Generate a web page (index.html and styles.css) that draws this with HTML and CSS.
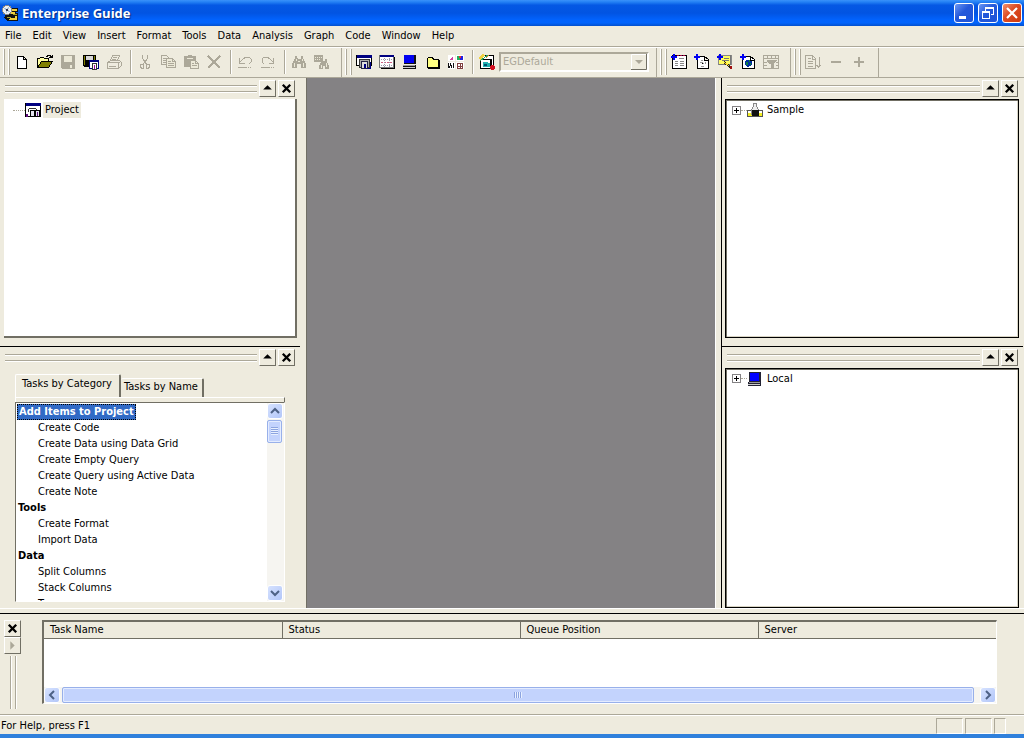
FILE: index.html
```
<!DOCTYPE html>
<html lang="en">
<head>
  <meta charset="UTF-8" />
  <meta name="viewport" content="width=device-width, initial-scale=1.0" />
  <title>Enterprise Guide</title>
  <link rel="stylesheet" href="styles.css">
</head>
<body>
  <header class="title-bar">
    <svg class="icon" viewBox="0 0 16 16"><path d="M5 3h11v4h-2v1h2v8H5l-3-3 3-5z" fill="#111"/><path d="M9 4h6v2H9zM8 7h5v2H8zM9 13h4v-2h2v4H7v-1z" fill="#f0d040"/><path d="M11 9h4v1h-4zM5 12h4v1H5z" fill="#a8a020"/><circle cx="5" cy="5" r="4.5" fill="#eef0f4" stroke="#888"/><path d="M2 3l3 2 2-3M4 8l1-3 3 2" stroke="#a8c4dc" fill="none"/><circle cx="5" cy="5" r="1.4" fill="#335"/></svg>
    <h1>Enterprise Guide</h1>
    <button class="win-btn" aria-label="Minimize"><svg viewBox="0 0 18 18"><path d="M4 12h7v3H4z" fill="#fff"/></svg></button>
    <button class="win-btn" aria-label="Restore"><svg class="crisp" viewBox="0 0 18 18"><path d="M6 3h9v8h-3v-1h2V5H7v2H6z" fill="#fff"/><path d="M3 7h8v8H3zM4 9v5h6V9z" fill="#fff" fill-rule="evenodd"/></svg></button>
    <button class="win-btn close" aria-label="Close"><svg viewBox="0 0 18 18"><path d="M4 4l10 10M14 4L4 14" stroke="#fff" stroke-width="2.2"/></svg></button>
  </header>

  <nav class="menu-bar">
    <a href="#">File</a>
    <a href="#">Edit</a>
    <a href="#">View</a>
    <a href="#">Insert</a>
    <a href="#">Format</a>
    <a href="#">Tools</a>
    <a href="#">Data</a>
    <a href="#">Analysis</a>
    <a href="#">Graph</a>
    <a href="#">Code</a>
    <a href="#">Window</a>
    <a href="#">Help</a>
  </nav>

  <div class="toolbars">
    <div class="toolbar">
      <span class="grip"></span>
      <button aria-label="New"><svg class="icon" viewBox="0 0 16 16"><path d="M3.5 2.5h6l3 3v9h-9zM9.500 2.500v3h3" fill="#fff" stroke="#000"/></svg></button>
      <button aria-label="Open"><svg class="icon" viewBox="0 0 16 16"><path d="M0.500 13.500v-9h2l1-1h3l1 1h4v3" fill="#ffffa0" stroke="#000"/><path d="M0.500 13.500l4-6h11l-4 6z" fill="#808000" stroke="#000"/><path d="M9 2h1v-1h3v1h1v1h1V1M12 3.500h3" fill="none" stroke="#000"/></svg></button>
      <button aria-label="Save" disabled><svg class="icon" viewBox="0 0 16 16"><path d="M1 1h14v14H2l-1-1z" fill="#aca899"/><path d="M4 2h8v6H4zM10 11h2v3h-2z" fill="#ece9d8"/></svg></button>
      <button aria-label="Save Project"><svg class="icon" viewBox="0 0 16 16"><path d="M0 1h13v12H1l-1-1z" fill="#000"/><path d="M1 2h1v9H1zM11 2h1v4h-1z" fill="#808000"/><path d="M3 2h7v4H3z" fill="#d8d8d8"/><path d="M6.500 6.500h9v8h-9z" fill="#fff" stroke="#000080"/><path d="M6 6h10v2H6z" fill="#000080"/><path d="M9.500 9.500h4v6h-4z" fill="#fff" stroke="#333"/><path d="M11 11h1v4h-1z" fill="#a000a0"/></svg></button>
      <button aria-label="Print" disabled><svg class="icon gray" viewBox="0 0 16 16"><path d="M4.500 6.500l2-5h7l-2 5M7 3.500h4M6 5.500h4M1.500 8.500l3-2h9l2 2v3l-3 3h-11zM1.500 8.500h11v6M3 12.500h7M12.500 8.500l3-1"/></svg></button>
      <span class="separator"></span>
      <button aria-label="Cut" disabled><svg class="icon gray" viewBox="0 0 16 16"><path d="M5.500 1v3l1 2 3 4M10.500 1v3l-1 2-3 4M4.500 10h2v4h-2l-1-1v-2zM9.500 10h2l1 1v2l-1 1h-2z"/></svg></button>
      <button aria-label="Copy" disabled><svg class="icon gray" viewBox="0 0 16 16"><path d="M1.500 1.500h5l2 2v7h-7zM3 4.500h3M3 6.500h3M3 8.500h3"/><path d="M6.500 4.500h6l3 3v6h-9z" fill="#ece9d8"/><path d="M12.500 4.500v3h3M8 7.500h3M8 9.500h6M8 11.500h6"/></svg></button>
      <button aria-label="Paste" disabled><svg class="icon gray" viewBox="0 0 16 16"><path d="M1 2h4V1h4v1h4v11H1z" fill="#aca899" stroke="none"/><path d="M4 4h6" stroke="#ece9d8"/><path d="M7.500 6.500h5l3 3v5h-8z" fill="#ece9d8"/><path d="M12.500 6.500v3h3M9 9.500h2M9 11.500h5"/></svg></button>
      <button aria-label="Delete" disabled><svg class="icon" viewBox="0 0 16 16"><path d="M2 2l12 12M14 2L2 14" stroke="#aca899" stroke-width="2"/></svg></button>
      <span class="separator"></span>
      <button aria-label="Undo" disabled><svg class="icon gray" viewBox="0 0 16 16"><path d="M2.500 4v5h5M3 8l3-3 3-2h3l2 2v3l-2 2M1 13.500h9M11 13.500h1M13 13.500h1"/></svg></button>
      <button aria-label="Redo" disabled><svg class="icon gray" viewBox="0 0 16 16"><path d="M13.500 4v5h-5M13 8l-3-3-3-2H4L2 5v3l2 2M1 13.500h9M11 13.500h1M13 13.500h1"/></svg></button>
      <span class="separator"></span>
      <button aria-label="Find" disabled><svg class="icon" viewBox="0 0 16 16"><path d="M4 2h2v2l1 1h2l1-1V2h2v2l3 6v4h-5v-4H6v4H1v-4l3-6z" fill="#aca899"/><path d="M5 5v2M3 9v4M11 5v2M12 9v4M7 7h2" stroke="#ece9d8"/></svg></button>
      <button aria-label="Replace" disabled><svg class="icon" viewBox="0 0 16 16"><path d="M0 1h9v7H0zM7 5h2v2h2V5h2v3l2 4v3h-4v-3H9v3H5v-3l2-4z" fill="#aca899"/><path d="M1 3h7M1 5h6" stroke="#ece9d8" stroke-dasharray="1 1"/><path d="M7 11v3M12 9v4" stroke="#ece9d8"/></svg></button>
    </div>

    <div class="toolbar">
      <span class="grip"></span>
      <button aria-label="Project Window"><svg class="icon" viewBox="0 0 16 16"><path d="M0.500 1.500h15v10h-15z" fill="#fff" stroke="#000"/><path d="M1 1h15v3H1z" fill="#000080"/><path d="M3.500 5.500h10v8h-10z" fill="#aaa" stroke="#333"/><path d="M5.500 7.500h6v7h-6z" fill="#ddd" stroke="#224"/><path d="M8 10h2v4H8zM14 8h1v7h-4v-1h3z" fill="#000080"/></svg></button>
      <button aria-label="Task Status"><svg class="icon" viewBox="0 0 16 16"><path d="M0.500 1.500h14v12h-14z" fill="#fff" stroke="#777"/><path d="M1 1h14v2H1z" fill="#000080"/><path d="M2 8.500h12" stroke="#d06080" stroke-dasharray="2 1"/><path d="M5.500 4v9M10.500 4v9M2 5.500h12M2 11.500h12" stroke="#99a" stroke-dasharray="1 1"/><path d="M15 3h1v12H2v-1h13z" fill="#000"/></svg></button>
      <button aria-label="Server List"><svg class="icon" viewBox="0 0 16 16"><path d="M2 1h12v9H2zM1 11h13v4H1z" fill="#111"/><path d="M2 1h10v8H2z" fill="#0000f0"/><path d="M1 11h12v1H1z" fill="#999"/><path d="M1 13h12v1H1z" fill="#ccc"/></svg></button>
      <button aria-label="Binder List"><svg class="icon" viewBox="0 0 16 16"><path d="M2.500 13.500v-9l1-1h4l1 2h5v8z" fill="#ffff80" stroke="#000"/><path d="M14 6v8H3" fill="none" stroke="#000"/></svg></button>
      <button aria-label="Task List"><svg class="icon" viewBox="0 0 16 16"><path d="M0 1h7v6H0zM8 1h8v6H8zM0 8h7v7H0zM8 8h8v7H8z" fill="#fff"/><path d="M2 5h1V4h1V3h1v3H2z" fill="#d040a0"/><path d="M9 2h3v4H9z" fill="#20b060"/><path d="M12 2h3v4h-3z" fill="#2020e0"/><path d="M11 2h2v2h-2z" fill="#f03030"/><path d="M0 9h1v5H0zM2 9h1v3H2zM3 11h1v3H3zM5 9h1v5H5zM1 12h1v2H1z" fill="#111"/><path d="M9.500 9.500h5v5h-5zM9 12h6M12 9v6" stroke="#804040" fill="none"/></svg></button>
      <span class="separator"></span>
      <button aria-label="Style"><svg class="icon" viewBox="0 0 16 16"><path d="M3 1h12v11h-2v3H1V5h2z" fill="#000"/><path d="M4 2h10v9h-1V5H4zM2 6h9v8H2z" fill="#fff"/><path d="M4 8h5v1h2v4H4z" fill="#20b0b0"/><path d="M5 10h3v2H5z" fill="#005070"/><path d="M0 4l3-4 3 1-4 6z" fill="#f0d040"/><path d="M1 7L9 1" stroke="#20a060"/><path d="M7 4l3-3" stroke="#e08020"/><path d="M12 11h3v1h1v3h-1v1h-3v-1h-1v-3h1z" fill="#d01020"/></svg></button>
      <select aria-label="Style name" disabled>
        <option>EGDefault</option>
      </select>
    </div>

    <div class="toolbar">
      <span class="grip"></span>
      <button aria-label="New Data"><svg class="icon" viewBox="0 0 16 16"><path d="M1.500 1.500h14v13h-14z" fill="#fff" stroke="#000"/><path d="M6 1.500h9" stroke="#a00040" stroke-dasharray="2 1"/><path d="M4 7.500h3M9 7.500h4M4 9.500h3M9 9.500h4M4 11.500h3M9 11.500h4M8 4.500h5" stroke="#888"/><path d="M0 2h2V0h2v2h2v2H4v2H2V4H0z" fill="#0000f0"/></svg></button>
      <button aria-label="New Code"><svg class="icon" viewBox="0 0 16 16"><path d="M3.500 14.500v-12h7l4 3v9zM10.500 2v4h4" fill="#fff" stroke="#000"/><path d="M7 6l2 1M6 9l2-1 2 2M7 12h3M11 8l1 2" stroke="#999"/><path d="M0 2h2V0h2v2h2v2H4v2H2V4H0z" fill="#0000f0"/></svg></button>
      <button aria-label="New Query"><svg class="icon" viewBox="0 0 16 16"><path d="M1.500 1.500h13v9h-13z" fill="#ffff60" stroke="#888"/><path d="M13.500 1v9H2M5 6.500h7M7 4.500h5" stroke="#777" fill="none"/><path d="M7 8l6 5" stroke="#222" stroke-width="2"/><path d="M7 8l5 4" stroke="#ffd820"/><path d="M13 12h2v3h-2z" fill="#a01010"/><path d="M0 2h2V0h2v2h2v2H4v2H2V4H0z" fill="#0000f0"/></svg></button>
      <button aria-label="New Report"><svg class="icon" viewBox="0 0 16 16"><path d="M2.500 14.500v-12h8l4 3v9z" fill="#fff" stroke="#000"/><path d="M10.500 2v4h4" stroke="#000" fill="none"/><path d="M6 6h4v1h2v4h-1v1H9v1H7v-1H6v-1H5V7h1z" fill="#0030a0"/><path d="M6 8h2v3H6zM9 6h1v2H9zM10 9h1v2h-1z" fill="#108040"/><path d="M0 2h2V0h2v2h2v2H4v2H2V4H0z" fill="#0000f0"/></svg></button>
      <button aria-label="Filter" disabled><svg class="icon gray" viewBox="0 0 16 16"><path d="M0.500 1.500h15v13h-15zM1 4.500h14M4.500 1v3M8.500 1v3M12.500 1v3M1 8.500h3M13 8.500h2M1 11.500h3M13 11.500h2"/><path d="M4 6h9v1l-3 3v4H8v-4L4 7z" fill="#aca899"/></svg></button>
    </div>

    <div class="toolbar">
      <span class="grip"></span>
      <button aria-label="Sort" disabled><svg class="icon gray" viewBox="0 0 16 16"><path d="M0.500 1.500h7l3 3v10h-10zM7.500 2v3h3M3 4.500h3M3 7.500h5M3 9.500h5M3 12.500h5M14 3v10M11.500 11l2 2 2-2"/></svg></button>
      <button aria-label="Collapse" disabled><svg class="icon" viewBox="0 0 16 16"><path d="M3 7h10v2H3z" fill="#aca899"/></svg></button>
      <button aria-label="Expand" disabled><svg class="icon" viewBox="0 0 16 16"><path d="M3 7h4V3h2v4h4v2H9v4H7V9H3z" fill="#aca899"/></svg></button>
    </div>
  </div>

  <main class="workspace">
    <aside class="dock left">
      <section class="pane">
        <div class="pane-bar">
          <span class="rails"></span>
          <button class="small-btn" aria-label="Expand pane"><svg viewBox="0 0 12 12"><path d="M6 3l4 4H2z" fill="#000"/></svg></button>
          <button class="small-btn" aria-label="Close pane"><svg viewBox="0 0 14 14"><path d="M3 3l8 8M11 3L3 11" stroke="#000" stroke-width="2.5"/></svg></button>
        </div>
        <ul class="tree raised">
          <li>
            <span class="stem"></span>
            <svg class="icon" viewBox="0 0 16 16"><path d="M0.500 1.500h15v13h-15z" fill="#fff" stroke="#000"/><path d="M1 1h15v3H1z" fill="#000080"/><path d="M4 6.500h7M3.500 7v3M11.500 7v2" stroke="#333"/><path d="M5.500 8.500h4v6h-4zM10.500 8.500h4v6h-4z" fill="#e4e4f0" stroke="#000"/><path d="M1 12h2v3H1zM12 10h1v4h-1z" fill="#601080"/></svg>
            <span class="label current">Project</span>
          </li>
        </ul>
      </section>
      <section class="pane">
        <div class="pane-bar">
          <span class="rails"></span>
          <button class="small-btn" aria-label="Expand pane"><svg viewBox="0 0 12 12"><path d="M6 3l4 4H2z" fill="#000"/></svg></button>
          <button class="small-btn" aria-label="Close pane"><svg viewBox="0 0 14 14"><path d="M3 3l8 8M11 3L3 11" stroke="#000" stroke-width="2.5"/></svg></button>
        </div>
        <div class="tabs">
          <button class="tab active">Tasks by Category</button>
          <button class="tab">Tasks by Name</button>
        </div>
        <div class="tab-edge"></div>
        <div class="task-box">
          <ul class="task-list">
            <li class="group"><span class="selected">Add Items to Project</span></li>
            <li>Create Code</li>
            <li>Create Data using Data Grid</li>
            <li>Create Empty Query</li>
            <li>Create Query using Active Data</li>
            <li>Create Note</li>
            <li class="group">Tools</li>
            <li>Create Format</li>
            <li>Import Data</li>
            <li class="group">Data</li>
            <li>Split Columns</li>
            <li>Stack Columns</li>
            <li>Transpose</li>
          </ul>
          <div class="scrollbar vertical">
            <button class="arrow" aria-label="Scroll up"><svg viewBox="0 0 14 14"><path d="M3 9l4-4 4 4" /></svg></button>
            <span class="thumb"></span>
            <button class="arrow last" aria-label="Scroll down"><svg viewBox="0 0 14 14"><path d="M3 5l4 4 4-4" /></svg></button>
          </div>
        </div>
      </section>
    </aside>

    <div class="canvas"></div>

    <aside class="dock right">
      <section class="pane">
        <div class="pane-bar">
          <span class="rails"></span>
          <button class="small-btn" aria-label="Expand pane"><svg viewBox="0 0 12 12"><path d="M6 3l4 4H2z" fill="#000"/></svg></button>
          <button class="small-btn" aria-label="Close pane"><svg viewBox="0 0 14 14"><path d="M3 3l8 8M11 3L3 11" stroke="#000" stroke-width="2.5"/></svg></button>
        </div>
        <ul class="tree sunken">
          <li>
            <button class="expander" aria-label="Expand Sample"><svg class="crisp" viewBox="0 0 9 9"><path d="M2 4h5v1H2zM4 2h1v5H4z" fill="#000"/></svg></button>
            <span class="stem"></span>
            <svg class="icon" viewBox="0 0 16 16"><path d="M0.500 8.500h15v6h-15z" fill="#f4f020" stroke="#555"/><path d="M6.500 1.500h3v3l2 3v5h-7v-5l2-3z" fill="#eee" stroke="#888"/><path d="M5 8h7v6H5z" fill="#111"/><path d="M1 9h3v2H1zM12 9h3v2h-3z" fill="#fff"/></svg>
            <span class="label">Sample</span>
          </li>
        </ul>
      </section>
      <section class="pane">
        <div class="pane-bar">
          <span class="rails"></span>
          <button class="small-btn" aria-label="Expand pane"><svg viewBox="0 0 12 12"><path d="M6 3l4 4H2z" fill="#000"/></svg></button>
          <button class="small-btn" aria-label="Close pane"><svg viewBox="0 0 14 14"><path d="M3 3l8 8M11 3L3 11" stroke="#000" stroke-width="2.5"/></svg></button>
        </div>
        <ul class="tree sunken">
          <li>
            <button class="expander" aria-label="Expand Local"><svg class="crisp" viewBox="0 0 9 9"><path d="M2 4h5v1H2zM4 2h1v5H4z" fill="#000"/></svg></button>
            <span class="stem"></span>
            <svg class="icon" viewBox="0 0 16 16"><path d="M2 1h12v10H2zM1 11h13v4H1z" fill="#223"/><path d="M3 2h9v8H3z" fill="#0000ff"/><path d="M2 11h11v1H2z" fill="#999"/><path d="M1 13h12v1H1z" fill="#ccc"/></svg>
            <span class="label">Local</span>
          </li>
        </ul>
      </section>
    </aside>
  </main>

  <section class="status-dock">
    <div class="side-bar">
      <button class="small-btn" aria-label="Close pane"><svg viewBox="0 0 14 14"><path d="M3 3l8 8M11 3L3 11" stroke="#000" stroke-width="2.5"/></svg></button>
      <button class="small-btn" aria-label="Expand pane" disabled><svg viewBox="0 0 12 12"><path d="M4 2l4 4-4 4z" fill="#aca899"/></svg></button>
      <span class="rails"></span>
    </div>
    <div class="queue">
      <table>
        <thead>
          <tr><th>Task Name</th><th>Status</th><th>Queue Position</th><th>Server</th></tr>
        </thead>
      </table>
      <div class="scrollbar horizontal">
        <button class="arrow" aria-label="Scroll left"><svg viewBox="0 0 14 14"><path d="M9 3L5 7l4 4" /></svg></button>
        <span class="thumb"></span>
        <button class="arrow" aria-label="Scroll right"><svg viewBox="0 0 14 14"><path d="M5 3l4 4-4 4" /></svg></button>
      </div>
    </div>
  </section>

  <footer class="status-bar">
    <span class="message">For Help, press F1</span>
    <span class="cell"></span>
    <span class="cell"></span>
    <span class="cell short"></span>
  </footer>
</body>
</html>
```
FILE: styles.css
```
:root {
  --face: #eeebde;
  --shadow: #aca899;
  --dark: #716f64;
  --select: #316ac5;
  --thumb: #c3d3fd;
}

* {
  box-sizing: border-box;
  margin: 0;
  padding: 0;
}

body {
  height: 100vh;
  display: flex;
  flex-direction: column;
  overflow: hidden;
  background: var(--face);
  color: #000;
  font-family: "DejaVu Sans Condensed", "Noto Sans", sans-serif;
  font-size: 11px;
  line-height: 16px;
  border-bottom: 4px solid #2f80dc;
}

button, select {
  font: inherit;
  color: inherit;
  background: none;
  border: none;
}
ul {
  list-style: none;
}
svg {
  display: block;
}
.icon {
  width: 16px;
  height: 16px;
  flex: none;
}
.icon, .crisp {
  shape-rendering: crispEdges;
}
.gray {
  fill: none;
  stroke: #aca899;
}

/* title bar */
.title-bar {
  height: 26px;
  flex: none;
  display: flex;
  align-items: center;
  gap: 4px;
  padding: 0 2px;
  background: linear-gradient(#3a92fa 0, #2380f4 8%, #0558e4 20%, #0254e2 50%, #0262fc 75%, #0264fc 88%, #0450cc 100%);
}
.title-bar h1 {
  flex: 1;
  font-family: "Open Sans", sans-serif;
  font-size: 13px;
  font-weight: bold;
  color: #fff;
  text-shadow: 1px 1px 1px #0a2a80;
}
.win-btn {
  width: 20px;
  height: 20px;
  border: 1px solid #fff;
  border-radius: 3px;
  background: linear-gradient(135deg, #6a97f4, #2458da 45%, #1f54d8);
}
.win-btn.close {
  background: linear-gradient(135deg, #f0906e, #dd4a22 45%, #cc3a10);
}

/* menu */
.menu-bar {
  height: 21px;
  flex: none;
  display: flex;
  align-items: center;
  gap: 11px;
  padding: 0 5px;
  border-bottom: 1px solid var(--shadow);
}
.menu-bar a {
  color: #000;
  text-decoration: none;
}

/* toolbars */
.toolbars {
  height: 31px;
  flex: none;
  display: flex;
  border-top: 1px solid #fff;
  border-bottom: 1px solid var(--shadow);
}
.toolbar {
  display: flex;
  align-items: center;
  padding: 0 7px 2px 3px;
  border-right: 1px solid var(--shadow);
}
.toolbar button {
  width: 23px;
  height: 24px;
  padding-left: 3px;
}
.grip {
  width: 8px;
  height: 26px;
  background: linear-gradient(90deg, #fff 0 1px, var(--shadow) 1px 2px, transparent 2px 5px, #fff 5px 6px, var(--shadow) 6px 7px, transparent 7px);
}
.separator {
  width: 8px;
  height: 24px;
  background: linear-gradient(90deg, transparent 4px, var(--shadow) 4px 5px, #fff 5px 6px, transparent 6px);
}
.toolbar select {
  width: 150px;
  height: 20px;
  appearance: none;
  padding-left: 2px;
  color: var(--shadow);
  opacity: 1;
  border: 2px solid;
  border-color: var(--shadow) #fff #fff var(--shadow);
  background: url("data:image/svg+xml,%3Csvg xmlns='http://www.w3.org/2000/svg' width='16' height='16'%3E%3Cpath d='M0.5 15V0.5H15' fill='none' stroke='%23fff'/%3E%3Cpath d='M15.5 0v15.5H0' fill='none' stroke='%23716f64'/%3E%3Cpath d='M4 6h8l-4 4z' fill='%23aca899'/%3E%3C/svg%3E") right center no-repeat;
}

/* workspace */
.workspace {
  flex: 1;
  min-height: 0;
  display: grid;
  grid-template-columns: 307px 1fr 309px;
}
.dock {
  min-height: 0;
  display: grid;
  grid-template-rows: 268fr 261fr;
}
.dock.left {
  padding-right: 6px;
  border-right: 1px solid var(--dark);
}
.dock.right {
  border-left: 1px solid #fff;
  padding: 0 1px 0 5px;
}
.canvas {
  background: #848284;
}
.pane {
  min-height: 0;
  display: flex;
  flex-direction: column;
}
.pane:first-child {
  border-bottom: 2px solid #000;
  border-bottom-width: 1px;
  padding-bottom: 8px;
}
.right .pane {
  border-left: 1px solid #000;
  padding-left: 3px;
  padding-right: 4px;
}
.pane-bar {
  height: 21px;
  flex: none;
  display: flex;
  align-items: center;
  gap: 2px;
  padding: 0 5px;
}
.right .pane-bar {
  padding: 0 1px 0 2px;
}
.rails {
  flex: 1;
  height: 7px;
  border: solid var(--shadow);
  border-width: 1px 0;
  box-shadow: inset 0 1px #fff, 0 1px #fff;
}
.small-btn {
  width: 17px;
  height: 17px;
  padding: 1px;
  border: 1px solid;
  border-color: #fff var(--dark) var(--dark) #fff;
}

.tree {
  flex: 1;
  background: #fff;
}
.tree.raised {
  margin: 0 3px 0 4px;
  padding: 2px 9px;
  border: solid var(--dark);
  border-width: 0 2px 2px 0;
}
.tree.sunken {
  padding: 1px 6px;
  border: 1px solid #000;
  box-shadow: inset 1px 1px var(--dark), inset -1px -1px #d8d4c4;
}
.tree li {
  height: 18px;
  display: flex;
  align-items: center;
}
.stem {
  width: 6px;
  border-top: 1px dotted var(--shadow);
}
.raised .stem {
  width: 12px;
}
.expander {
  width: 9px;
  height: 9px;
  outline: 1px solid #848284;
  outline-offset: -1px;
}
.label {
  padding: 0 2px;
  margin-left: 2px;
}

.label.current {
  background: var(--face);
}

/* task list */
.tabs {
  height: 26px;
  flex: none;
  display: flex;
  align-items: flex-end;
  margin: 3px 15px 0;
}
.tab {
  height: 19px;
  padding: 0 4px 1px 3px;
  border: solid;
  border-width: 1px 2px 0 0;
  border-color: #fff var(--dark) #fff #fff;
  border-radius: 2px 2px 0 0;
}
.tab.active {
  height: 23px;
  padding: 0 7px 3px 6px;
  border-left-width: 1px;
}
.tab-edge {
  height: 5px;
  flex: none;
  margin: 0 15px;
  border: solid #fff;
  border-width: 1px 1px 0 1px;
  border-right-color: var(--dark);
}
.task-box {
  flex: 1;
  min-height: 0;
  display: flex;
  margin: 0 15px 6px;
  border: 1px solid;
  border-color: var(--dark) #fff #fff var(--dark);
  background: #fff;
  overflow: hidden;
}
.task-list {
  flex: 1;
  overflow: hidden;
  padding: 1px 2px;
}
.task-list li {
  padding-left: 20px;
  white-space: nowrap;
}
.task-list .group {
  padding-left: 0;
  font-weight: bold;
}
.selected {
  display: inline-block;
  padding: 0 2px;
  margin-left: -1px;
  background: var(--select);
  color: #fff;
  outline: 1px dotted #000;
  outline-offset: -1px;
}

.scrollbar {
  display: flex;
  background: #f6f5f1;
}
.scrollbar.vertical {
  width: 17px;
  flex-direction: column;
}
.scrollbar.horizontal {
  height: 16px;
  gap: 2px;
}
.arrow {
  width: 16px;
  height: 16px;
  flex: none;
  border: 1px solid #fff;
  border-radius: 3px;
  background: linear-gradient(135deg, #d6e2ff, #b2c6f8);
}
.arrow path {
  fill: none;
  stroke: #4d6185;
  stroke-width: 2;
}
.arrow.last {
  margin-top: auto;
}
.thumb {
  border: 1px solid #98b0ea;
  border-radius: 2px;
  box-shadow: inset 0 0 0 1px #e4ecff;
  background: var(--thumb);
}
.vertical .thumb {
  width: 15px;
  height: 23px;
  margin-top: 1px;
  background: repeating-linear-gradient(#8ca4e0 0 1px, #e8f0ff 1px 2px) center / 7px 8px no-repeat, var(--thumb);
}
.horizontal .thumb {
  flex: 1;
  margin-right: 4px;
  background: repeating-linear-gradient(90deg, #8ca4e0 0 1px, #e8f0ff 1px 2px) center / 8px 6px no-repeat, var(--thumb);
}

/* task status window */
.status-dock {
  height: 101px;
  flex: none;
  display: flex;
  margin-top: 5px;
  padding: 6px 27px 3px 4px;
  border-top: 1px solid #000;
  box-shadow: 0 -4px var(--face), 0 -5px #fff;
}
.side-bar {
  width: 17px;
  display: flex;
  flex-direction: column;
  margin-right: 21px;
}
.side-bar .rails {
  width: 6px;
  margin: 2px 6px;
  border-width: 0 1px;
  box-shadow: inset 1px 0 #fff, 1px 0 #fff;
}
.queue {
  flex: 1;
  display: flex;
  flex-direction: column;
  justify-content: space-between;
  margin-bottom: 7px;
  background: #fff;
  border: solid;
  border-width: 2px 1px 1px 2px;
  border-color: var(--dark) #fff #fff var(--dark);
}
table {
  width: 100%;
  table-layout: fixed;
  border-collapse: collapse;
}
th {
  height: 16px;
  padding-left: 6px;
  text-align: left;
  font-weight: normal;
  line-height: 16px;
  background: var(--face);
  border-right: 1px solid var(--dark);
  border-bottom: 1px solid var(--dark);
}
th:last-child {
  border-right: none;
}

/* status bar */
.status-bar {
  height: 20px;
  flex: none;
  display: flex;
  gap: 2px;
  padding: 3px 18px 0 1px;
  border-top: 1px solid var(--shadow);
  box-shadow: inset 0 1px #fff;
}
.message {
  flex: 1;
}
.cell {
  width: 27px;
  border: 1px solid;
  border-color: var(--shadow) #fff #fff var(--shadow);
}
.cell.short {
  width: 12px;
}
```
